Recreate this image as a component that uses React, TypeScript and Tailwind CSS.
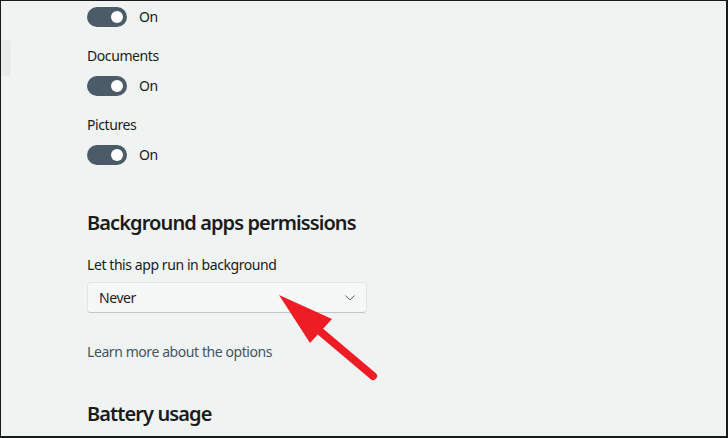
import React from "react";

const font = { fontFamily: '"Noto Sans", "Open Sans", sans-serif' };

const Toggle = () => (
  <div className="flex h-5 items-center gap-3">
    <div className="flex h-5 w-10 items-center justify-end rounded-full bg-[#4b5b68] pr-[4px]">
      <div className="h-3 w-3 rounded-full bg-white" />
    </div>
    <span className="text-[14px] leading-5 tracking-[-0.03em] text-[#1b1b1b]">On</span>
  </div>
);

const Label = ({ children, className = "" }: { children: React.ReactNode; className?: string }) => (
  <div className={`text-[14px] leading-5 tracking-[-0.03em] text-[#1b1b1b] ${className}`}>{children}</div>
);

export default function App() {
  return (
    <div
      className="relative flex h-[438px] w-[728px] overflow-hidden border-t border-l border-r-2 border-b-2 border-[#1a1a1a] bg-[#eff3f2]"
      style={font}
    >
      <div className="w-[10px] shrink-0">
        <div className="mt-[39px] h-[36px] w-[10px] rounded-r-[4px] bg-[#e8ebea]" />
      </div>

      <div className="flex flex-col pl-[76px] pt-[6px]">
        <Toggle />
        <Label className="mt-[19px]">Documents</Label>
        <div className="mt-[10px]">
          <Toggle />
        </div>
        <Label className="mt-[19px]">Pictures</Label>
        <div className="mt-[10px]">
          <Toggle />
        </div>

        <h2 className="mt-[44px] text-[20px] font-semibold leading-7 tracking-[-0.045em] text-[#1b1b1b]">
          Background apps permissions
        </h2>
        <Label className="mt-[18px]">Let this app run in background</Label>
        <div className="mt-[7px] flex h-[31px] w-[280px] items-center justify-between rounded-[4px] border border-b-[#c4c6c6] border-[#e3e5e5] bg-[#f6f8f8] pl-[11px] pr-[11px]">
          <span className="text-[14px] leading-5 tracking-[-0.03em] text-[#1b1b1b]">Never</span>
          <svg width="10" height="6" viewBox="0 0 10 6" fill="none">
            <path d="M0.5 0.5 L5 5 L9.5 0.5" stroke="#5f6368" strokeWidth="1" />
          </svg>
        </div>
        <div className="mt-[29px] text-[14px] leading-5 tracking-[-0.03em] text-[#47545f]">
          Learn more about the options
        </div>
        <h2 className="mt-[38px] text-[20px] font-semibold leading-7 tracking-[-0.045em] text-[#1b1b1b]">
          Battery usage
        </h2>
      </div>

      <svg className="absolute left-0 top-0" width="728" height="438" viewBox="0 0 728 438">
        <polygon points="278,294 331,318 309,342" fill="#ee1c25" />
        <line x1="314" y1="326" x2="372" y2="375" stroke="#ee1c25" strokeWidth="8" strokeLinecap="round" />
      </svg>
    </div>
  );
}
